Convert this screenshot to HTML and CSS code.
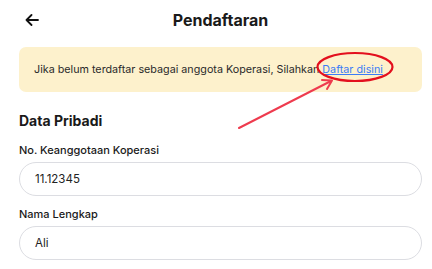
FILE: index.html
```html
<!DOCTYPE html>
<html>
<head>
<meta charset="utf-8">
<link rel="stylesheet" href="styles.css">
</head>
<body>
<div class="page">
  <header class="header">
    <span class="back">
      <svg width="14" height="12" viewBox="0 0 14 12"><path d="M13 6H1.5M6.5 1L1.5 6l5 5" fill="none" stroke="#111" stroke-width="1.8" stroke-linecap="round" stroke-linejoin="round"/></svg>
    </span>
    <h1 class="title">Pendaftaran</h1>
  </header>
  <div class="banner">
    <p class="banner-text">Jika belum terdaftar sebagai anggota Koperasi, Silahkan <a class="link" href="#">Daftar disini</a></p>
  </div>
  <h2 class="section">Data Pribadi</h2>
  <div class="field">
    <label class="label">No. Keanggotaan Koperasi</label>
    <div class="input">11.12345</div>
  </div>
  <div class="field">
    <label class="label">Nama Lengkap</label>
    <div class="input">Ali</div>
  </div>
</div>
<svg class="annot" width="432" height="269" viewBox="0 0 432 269">
  <ellipse cx="355" cy="67" rx="37.5" ry="14" fill="none" stroke="#e3101e" stroke-width="2.2"/>
  <path d="M239 128L331 81" stroke="#ee3b4e" stroke-width="2" stroke-linecap="round" fill="none"/>
  <path d="M322 80L332 80.5L327 89" stroke="#ee3b4e" stroke-width="2" stroke-linecap="round" stroke-linejoin="round" fill="none"/>
</svg>
</body>
</html>
```
FILE: styles.css
```css
html, body { margin: 0; padding: 0; background: #fff; }
body { font-family: Inter, "Noto Sans", sans-serif; color: #1a1a1a; width: 432px; height: 269px; overflow: hidden; position: relative; }
.page { padding: 0 10px 0 19px; }
.header { height: 40px; display: flex; align-items: center; justify-content: center; position: relative; }
.back { position: absolute; left: 6px; top: 14px; display: flex; }
.title { margin: 0; font-size: 16px; font-weight: 700; color: #1a1a1a; line-height: 20px; }
.banner { margin-top: 7px; height: 45px; box-sizing: border-box; background: #fdf1cc; border-radius: 7px; display: flex; align-items: center; padding-left: 15px; }
.banner-text { margin: 0; font-size: 10.75px; line-height: 14px; color: #2a2a2a; white-space: nowrap; }
.link { color: #3b7cf6; text-decoration: underline; }
.section { margin: 20px 0 0; font-size: 14px; font-weight: 700; color: #1a1a1a; line-height: 17px; }
.field { display: flex; flex-direction: column; }
.label { font-size: 11px; font-weight: 500; color: #1a1a1a; margin-top: 15px; line-height: 13px; }
.field + .field .label { margin-top: 12px; }
.input { margin-top: 5px; height: 34px; box-sizing: border-box; border: 1px solid #dcdde2; border-radius: 17px; padding-left: 15px; display: flex; align-items: center; font-size: 11.5px; color: #222; }
.annot { position: absolute; left: 0; top: 0; pointer-events: none; }
```
